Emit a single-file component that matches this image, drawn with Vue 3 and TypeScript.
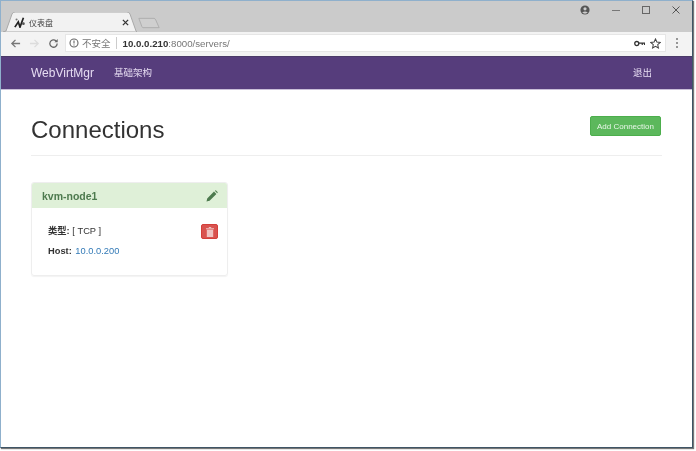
<script setup lang="ts">
const title = '仪表盘'
</script>

<template>
  <div class="stage">
    <div class="window">
      <div class="tabstrip">
        <div class="tab">
          <svg class="tab-shape" width="134" height="20" viewBox="0 0 134 20">
            <path d="M0 20 L3 19 L9 2 Q10 0 12 0 L124 0 Q126 0 127 2 L133 19 L134 20 Z" fill="#f2f2f2" stroke="#a9a9a9" stroke-width="1" />
          </svg>
          <svg class="favicon" width="12" height="12" viewBox="0 0 14 14">
            <path d="M1 13 L5 7 L7 13 L11 2" fill="none" stroke="#222" stroke-width="2" />
            <circle cx="11" cy="9" r="1.6" fill="#555" />
            <circle cx="3" cy="4" r="1.2" fill="#777" />
          </svg>
          <span class="tab-title">{{ title }}</span>
          <svg class="tab-close" width="7" height="7" viewBox="0 0 8 8">
            <path d="M1 1 L7 7 M7 1 L1 7" stroke="#333" stroke-width="1.5" />
          </svg>
        </div>
        <svg class="newtab" width="22" height="12" viewBox="0 0 26 13">
          <path d="M1 1 H19 Q20 1 21 3 L25 12 H6 Q5 12 4.5 10.5 Z" fill="#cfcfcf" stroke="#a8a8a8" />
        </svg>
        <div class="controls">
          <svg width="10" height="10" viewBox="0 0 12 12" class="profile">
            <circle cx="6" cy="6" r="5.5" fill="#555" />
            <circle cx="6" cy="4.6" r="1.9" fill="#ccc" />
            <path d="M2.6 9.4 Q6 6.4 9.4 9.4 Q6 11.4 2.6 9.4 Z" fill="#ccc" />
          </svg>
          <svg width="10" height="10" viewBox="0 0 10 10" class="minimize">
            <path d="M1 5.5 H9" stroke="#777" stroke-width="1" />
          </svg>
          <svg width="10" height="10" viewBox="0 0 10 10" class="maximize">
            <rect x="1.5" y="1.5" width="7" height="7" fill="none" stroke="#666" stroke-width="1" />
          </svg>
          <svg width="10" height="10" viewBox="0 0 10 10" class="close">
            <path d="M1.5 1.5 L8.5 8.5 M8.5 1.5 L1.5 8.5" stroke="#555" stroke-width="1" />
          </svg>
        </div>
      </div>

      <div class="toolbar">
        <svg class="nav-ic" width="11" height="11" viewBox="0 0 12 12">
          <path d="M11 6 H2 M6 2 L2 6 L6 10" fill="none" stroke="#777" stroke-width="1.4" />
        </svg>
        <svg class="nav-ic" width="11" height="11" viewBox="0 0 12 12">
          <path d="M1 6 H10 M6 2 L10 6 L6 10" fill="none" stroke="#dcdcdc" stroke-width="1.4" />
        </svg>
        <svg class="nav-ic last" width="11" height="11" viewBox="0 0 12 12">
          <path d="M10 6 A4 4 0 1 1 8.8 3.2" fill="none" stroke="#666" stroke-width="1.4" />
          <path d="M10.6 1 V4.6 H7 Z" fill="#666" />
        </svg>
        <div class="omnibox">
          <svg class="info" width="10" height="10" viewBox="0 0 10 10">
            <circle cx="5" cy="5" r="4" fill="none" stroke="#666" stroke-width="1.1" />
            <path d="M5 2.6 V5.6 M5 6.4 V7.6" stroke="#666" stroke-width="1.1" />
          </svg>
          <span class="insecure">不安全</span>
          <span class="sep"></span>
          <span class="url"><b>10.0.0.210</b>:8000/servers/</span>
          <svg class="key" width="11" height="7" viewBox="0 0 12 7">
            <circle cx="3" cy="3.5" r="2.2" fill="none" stroke="#333" stroke-width="1.4" />
            <path d="M5 3 H11.5 V5 M9 3 V5" fill="none" stroke="#333" stroke-width="1.3" />
          </svg>
          <svg class="star" width="11" height="11" viewBox="0 0 12 12">
            <path d="M6 1 L7.5 4.4 L11.2 4.8 L8.4 7.2 L9.2 10.9 L6 9 L2.8 10.9 L3.6 7.2 L.8 4.8 L4.5 4.4 Z" fill="none" stroke="#444" stroke-width="1.1" />
          </svg>
        </div>
        <svg class="menu" width="4" height="12" viewBox="0 0 4 12">
          <circle cx="2" cy="2" r="1" fill="#777" />
          <circle cx="2" cy="6" r="1" fill="#777" />
          <circle cx="2" cy="10" r="1" fill="#777" />
        </svg>
      </div>

      <nav class="navbar">
        <span class="brand">WebVirtMgr</span>
        <span class="nav-link">基础架构</span>
        <span class="nav-link logout">退出</span>
      </nav>

      <main class="page">
        <header class="page-header">
          <h1>Connections</h1>
          <button class="add" type="button">Add Connection</button>
        </header>

        <section class="card">
          <div class="card-head">
            <span class="host-name">kvm-node1</span>
            <svg width="12" height="12" viewBox="0 0 12 12">
              <path d="M0.5 11.5 L1.2 8.4 L8 1.6 L10.4 4 L3.6 10.8 Z M8.8 0.8 L9.8 0.2 L11.8 2.2 L11.2 3.2 Z" fill="#4d7a4e" />
            </svg>
          </div>
          <div class="card-body">
            <div class="rows">
              <div class="row"><b>类型:</b> [ TCP ]</div>
              <div class="row"><b>Host:</b> <a>10.0.0.200</a></div>
            </div>
            <button class="del" type="button" aria-label="delete">
              <svg width="8" height="10" viewBox="0 0 8 10">
                <path d="M0 1.2 H8 V2.2 H0 Z M2.8 0 H5.2 V1 H2.8 Z M.8 2.8 H7.2 V10 H.8 Z" fill="#f0c4c2" />
              </svg>
            </button>
          </div>
        </section>
      </main>
    </div>
  </div>
</template>

<style>
html, body { margin: 0; background: #fff; }
</style>

<style scoped>
.stage {
  width: 696px;
  height: 451px;
  overflow: hidden;
  background: #fff;
  font-family: "Liberation Sans", "Noto Sans CJK SC", sans-serif;
  color: #333;
  filter: blur(0.45px);
}
.window {
  width: 693px;
  height: 448px;
  box-sizing: border-box;
  border: 1px solid #8fb0cc;
  border-right-color: #3f5566;
  border-bottom-color: #3f5566;
  box-shadow: 1px 1px 1px #777;
  display: flex;
  flex-direction: column;
  background: #fff;
  overflow: hidden;
}
.tabstrip {
  height: 31px;
  flex: none;
  background: #cbcbcb;
  display: flex;
  align-items: flex-end;
  position: relative;
}
.tab {
  position: relative;
  width: 134px;
  height: 20px;
  margin-left: 2px;
  display: flex;
  align-items: center;
  padding: 0 0 0 11px;
  box-sizing: border-box;
}
.tab-shape { position: absolute; left: 0; top: 0; }
.favicon, .tab-title, .tab-close { position: relative; }
.tab-title {
  font-size: 8px;
  color: #444;
  margin-left: 3px;
}
.tab-close { margin-left: auto; margin-right: 8px; }
.newtab { margin-left: 1px; margin-bottom: 3px; }
.controls {
  position: absolute;
  right: 0;
  top: 4px;
  display: flex;
  align-items: center;
}
.profile { margin-right: 21px; }
.minimize { margin-right: 20px; }
.maximize { margin-right: 20px; }
.close { margin-right: 11px; }
.toolbar {
  height: 24px;
  flex: none;
  background: #f3f3f3;
  display: flex;
  align-items: center;
  padding: 0 0 2px 9px;
  box-sizing: border-box;
}
.nav-ic { margin-right: 8px; }
.nav-ic.last { margin-right: 6px; }
.omnibox {
  width: 601px;
  height: 18px;
  background: #fff;
  border: 1px solid #e6e6e6;
  box-sizing: border-box;
  display: flex;
  align-items: center;
  padding-left: 3px;
  font-size: 10px;
}
.insecure { margin-left: 3px; color: #777; font-size: 9.5px; }
.sep { width: 1px; height: 12px; background: #ccc; margin: 0 6px 0 5px; }
.url { color: #777; font-size: 9.7px; }
.url b { color: #333; }
.key { margin-left: auto; margin-right: 5px; }
.star { margin-right: 4px; }
.menu { margin-left: 9px; }
.navbar {
  height: 34px;
  flex: none;
  background: #563d7c;
  border-top: 1px solid #4a3a68;
  border-bottom: 1px solid #c9bfd8;
  box-sizing: border-box;
  display: flex;
  align-items: center;
  padding: 0 40px 0 30px;
  color: #e6dcf2;
}
.brand { font-size: 12px; margin-right: 20px; }
.nav-link { font-size: 9.5px; margin-top: -3px; }
.logout { margin-left: auto; }
.page {
  flex: 1;
  padding: 0 30px;
  background: #fff;
}
.page-header {
  height: 65px;
  border-bottom: 1px solid #eee;
  display: flex;
  align-items: center;
  justify-content: space-between;
  margin-bottom: 26px;
}
h1 {
  margin: 14px 0 0;
  font-size: 24px;
  font-weight: 400;
  color: #333;
}
.add {
  width: 71px;
  height: 20px;
  margin-top: 7px;
  margin-right: 1px;
  background: #5cb85c;
  border: 1px solid #4cae4c;
  border-radius: 2px;
  color: #e8f6e8;
  font-family: inherit;
  font-size: 8px;
  padding: 0;
}
.card {
  width: 197px;
  height: 94px;
  box-sizing: border-box;
  border: 1px solid #eee;
  border-radius: 3px;
  box-shadow: 0 1px 1px rgba(0, 0, 0, 0.05);
  overflow: hidden;
}
.card-head {
  height: 25px;
  background: #dff0d8;
  display: flex;
  align-items: center;
  justify-content: space-between;
  padding: 0 9px 0 10px;
}
.host-name {
  font-size: 10.5px;
  font-weight: 700;
  color: #4d7a4e;
}
.card-body {
  display: flex;
  justify-content: space-between;
  padding: 13px 9px 0 16px;
}
.rows { font-size: 9.3px; color: #333; }
.row { height: 20px; line-height: 20px; }
.row a { color: #337ab7; margin-left: 1px; }
.del {
  width: 17px;
  height: 15px;
  margin-top: 3px;
  background: #d9534f;
  border: 1px solid #d43f3a;
  border-radius: 2px;
  padding: 0;
  display: flex;
  align-items: center;
  justify-content: center;
}
</style>
